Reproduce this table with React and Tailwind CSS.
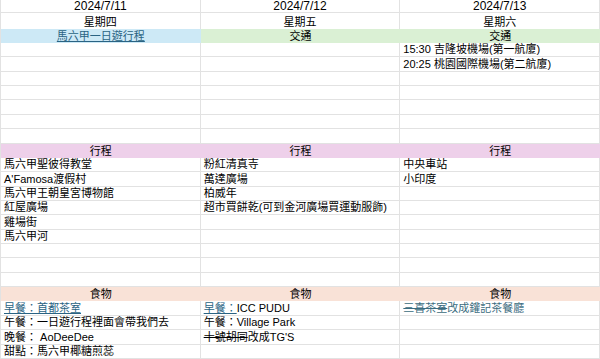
import React from "react";

const FONT = { fontFamily: '"Liberation Sans", "Noto Sans CJK TC", Arial, sans-serif' };

function Cell({ children, center, fill, className = "" }) {
  const base = "h-full flex items-end pb-[1px] overflow-visible whitespace-nowrap";
  const align = center ? "justify-center" : "justify-start pl-[3px]";
  const border = fill ? fill : "border-r border-b border-[#e2e2e2]";
  return <div className={`${base} ${align} ${border} ${className}`}>{children}</div>;
}

function Row({ h, cells, fill }) {
  return (
    <div className={`grid grid-cols-3 ${h}`}>
      {cells.map((c, i) => (
        <Cell key={i} center={fill !== undefined || c.center} fill={fill}>
          {c.content !== undefined ? c.content : c}
        </Cell>
      ))}
    </div>
  );
}

const LINK = "text-[#2a6383] underline underline-offset-[1px]";

export default function App() {
  const R = "h-[14.36px]";
  const blank = ["", "", ""];
  return (
    <div className="w-[600px] h-[359px] overflow-hidden bg-white text-[11px] leading-[12px] text-black border-l border-[#e2e2e2]" style={FONT}>
      <div className="grid grid-cols-3 h-[13px]">
        {["2024/7/11", "2024/7/12", "2024/7/13"].map((d) => (
          <div key={d} className="h-full flex items-end justify-center text-[12px] leading-[12px] border-r border-b border-[#e2e2e2]">{d}</div>
        ))}
      </div>
      <div className="grid grid-cols-3 h-[15.5px]">
        {["星期四", "星期五", "星期六"].map((d) => (
          <div key={d} className="h-full flex items-end justify-center pb-[1px] border-r border-[#e2e2e2]">{d}</div>
        ))}
      </div>
      <div className="grid grid-cols-3 h-[14.5px]">
        <div className="h-full flex items-end justify-center pb-[1px] bg-[#cde9f6]"><span className={LINK}>馬六甲一日遊行程</span></div>
        <div className="h-full flex items-end justify-center pb-[1px] bg-[#daf0d4]">交通</div>
        <div className="h-full flex items-end justify-center pb-[1px] bg-[#daf0d4]">交通</div>
      </div>
      <Row h={R} cells={["", "", "15:30 吉隆坡機場(第一航廈)"]} />
      <Row h={R} cells={["", "", "20:25 桃園國際機場(第二航廈)"]} />
      <Row h={R} cells={blank} />
      <Row h={R} cells={blank} />
      <Row h={R} cells={blank} />
      <Row h={R} cells={blank} />
      <Row h={R} cells={blank} />
      <div className={`grid grid-cols-3 ${R} bg-[#eed0ea]`}>
        {["行程", "行程", "行程"].map((d, i) => (
          <div key={i} className="h-full flex items-end justify-center pb-[1px]">{d}</div>
        ))}
      </div>
      <Row h={R} cells={["馬六甲聖彼得教堂", "粉紅清真寺", "中央車站"]} />
      <Row h={R} cells={["A'Famosa渡假村", "萬達廣場", "小印度"]} />
      <Row h={R} cells={["馬六甲王朝皇宮博物館", "柏威年", ""]} />
      <Row h={R} cells={["紅屋廣場", "超市買餅乾(可到金河廣場買運動服飾)", ""]} />
      <Row h={R} cells={["雞場街", "", ""]} />
      <Row h={R} cells={["馬六甲河", "", ""]} />
      <Row h={R} cells={blank} />
      <Row h={R} cells={blank} />
      <Row h={R} cells={blank} />
      <div className={`grid grid-cols-3 ${R} bg-[#f9e2d7]`}>
        {["食物", "食物", "食物"].map((d, i) => (
          <div key={i} className="h-full flex items-end justify-center pb-[1px]">{d}</div>
        ))}
      </div>
      <Row
        h={R}
        cells={[
          <span className={LINK}>早餐：首都茶室</span>,
          <span><span className={LINK}>早餐：</span>ICC PUDU</span>,
          <span className="text-[#3b6c80]"><span className="line-through">三喜茶室</span>改成鑵記茶餐廳</span>,
        ]}
      />
      <Row h={R} cells={["午餐：一日遊行程裡面會帶我們去", "午餐：Village Park", ""]} />
      <Row h={R} cells={["晚餐： AoDeeDee", <span><span className="line-through">十號胡同</span>改成TG'S</span>, ""]} />
      <Row h={R} cells={["甜點：馬六甲椰糖煎蕊", "", ""]} />
    </div>
  );
}
